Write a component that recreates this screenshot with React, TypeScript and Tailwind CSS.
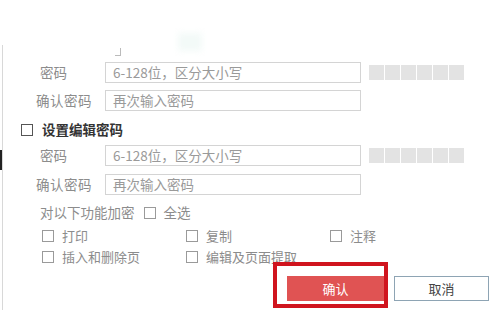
import React from "react";

const font = { fontFamily: '"Noto Sans CJK SC", "Noto Sans", sans-serif' };

function Box({ dark }: { dark?: boolean }) {
  return (
    <span
      className={
        "inline-block w-[12px] h-[12px] border bg-white " +
        (dark ? "border-[#555]" : "border-[#9a9a9a]")
      }
    />
  );
}

function PwdRow({ label, placeholder, bars }: { label: string; placeholder: string; bars?: boolean }) {
  const wide = label.length > 2;
  return (
    <div className="flex items-center h-[21px]">
      <div
        className={
          "w-[105px] text-[13.5px] text-[#8c8c8c] leading-none " +
          (wide ? "pl-[36px] tracking-[0.5px]" : "pl-[40px]")
        }
      >
        {label}
      </div>
      <div className="w-[256px] h-[21px] border border-[#d4d4d4] flex items-center px-[7px] text-[13.5px] text-[#9a9a9a] leading-none">
        {placeholder}
      </div>
      {bars && (
        <div className="flex gap-[1px] ml-[8px]">
          {[0, 1, 2, 3, 4, 5].map((i) => (
            <span key={i} className="w-[15px] h-[15px] bg-[#e3e3e3]" />
          ))}
        </div>
      )}
    </div>
  );
}

function Opt({ label }: { label: string }) {
  return (
    <div className="flex items-center gap-[8px] h-[13px] text-[13px] text-[#8c8c8c] leading-none">
      <Box />
      <span>{label}</span>
    </div>
  );
}

export default function App() {
  return (
    <div className="relative w-[500px] h-[310px] bg-white overflow-hidden" style={font}>
      {/* faint dialog edge */}
      <div className="absolute left-[2px] top-[45px] bottom-0 w-px bg-[#d8d8d8]" />
      <div className="absolute left-0 top-[150px] w-[2px] h-[20px] bg-[#222]" />
      <div className="absolute left-[115px] top-[48px] w-[6px] h-[8px] border-b border-r border-[#bbb]" />
      <div className="absolute left-[178px] top-[33px] w-[24px] h-[18px] bg-[#f3faf8] blur-[3px]" />

      <div className="flex flex-col pt-[62px]">
        <PwdRow label="密码" placeholder="6-128位，区分大小写" bars />
        <div className="mt-[7px]">
          <PwdRow label="确认密码" placeholder="再次输入密码" />
        </div>

        <div className="mt-[12px] flex items-center gap-[9px] pl-[21px] h-[14px]">
          <Box dark />
          <span className="text-[13.5px] font-bold text-[#333] leading-none">设置编辑密码</span>
        </div>

        <div className="mt-[8px]">
          <PwdRow label="密码" placeholder="6-128位，区分大小写" bars />
        </div>
        <div className="mt-[8px]">
          <PwdRow label="确认密码" placeholder="再次输入密码" />
        </div>

        <div className="mt-[11px] flex items-center pl-[40px] h-[14px] text-[13.5px] text-[#8c8c8c] leading-none">
          <span>对以下功能加密</span>
          <span className="ml-[9px] flex">
            <Box />
          </span>
          <span className="ml-[8px]">全选</span>
        </div>

        <div className="mt-[9px] pl-[42px] grid grid-cols-[144px_144px_144px] gap-y-[8px]">
          <Opt label="打印" />
          <Opt label="复制" />
          <Opt label="注释" />
          <Opt label="插入和删除页" />
          <Opt label="编辑及页面提取" />
        </div>

        <div className="mt-[13px] flex pl-[287px] gap-[10px]">
          <button className="w-[97px] h-[25px] bg-[#e05353] text-white text-[13px] leading-none">确认</button>
          <button className="w-[95px] h-[25px] border border-[#8ea4b4] bg-white text-[#444] text-[13px] leading-none">
            取消
          </button>
        </div>
      </div>

      {/* red highlight annotation */}
      <div className="absolute left-[273px] top-[262px] w-[115px] h-[46px] border-4 border-[#d0141e]" />
    </div>
  );
}
